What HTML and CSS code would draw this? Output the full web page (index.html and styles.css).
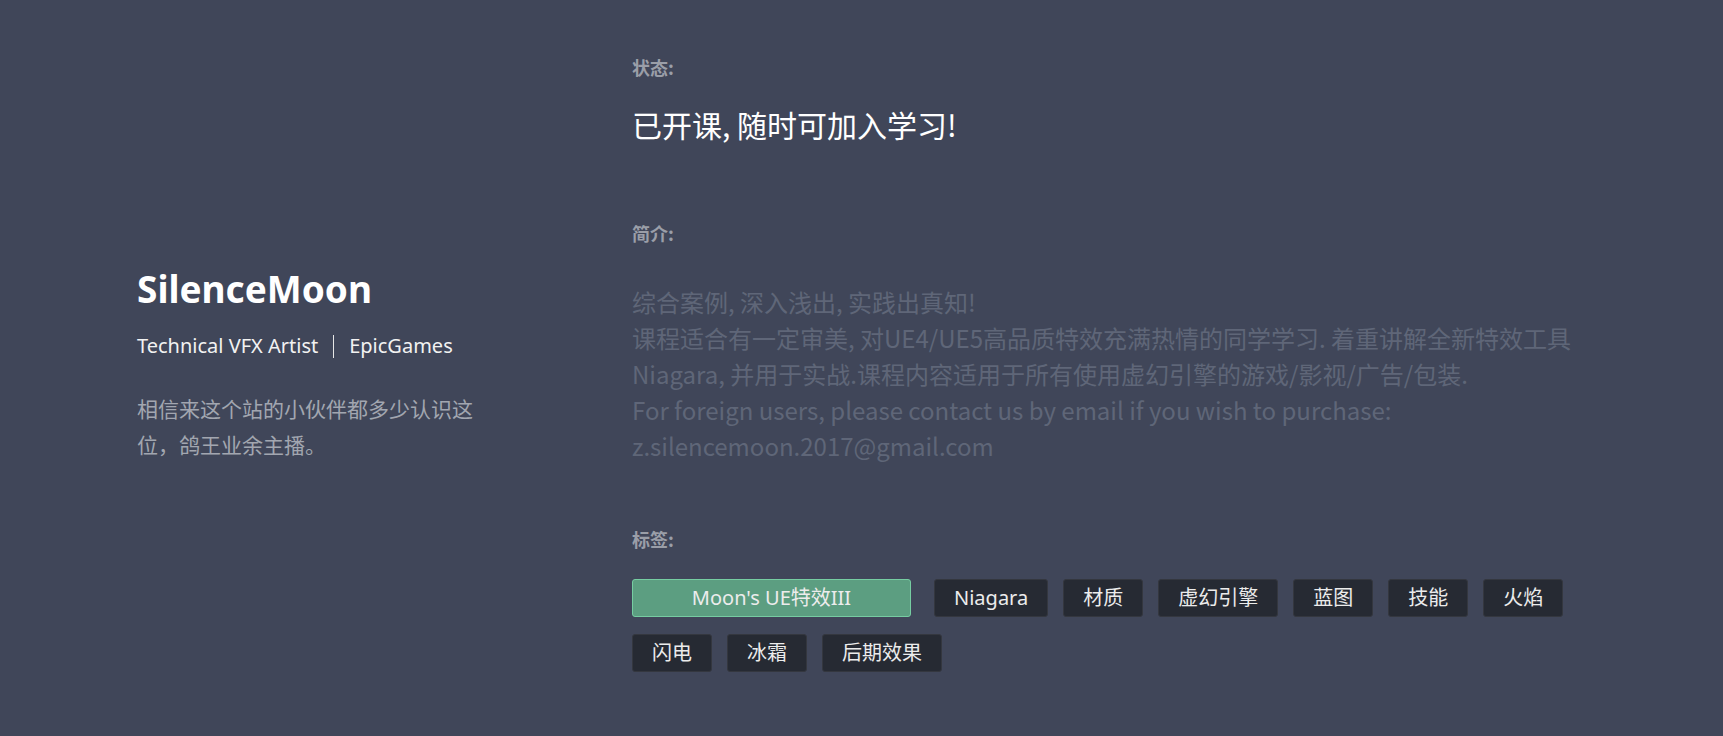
FILE: index.html
```html
<!DOCTYPE html>
<html lang="zh-CN">
<head>
<meta charset="utf-8">
<title>SilenceMoon</title>
<link rel="stylesheet" href="styles.css">
</head>
<body>
<main class="page">
  <section class="author">
    <h1 class="author-name">SilenceMoon</h1>
    <p class="author-role"><span>Technical VFX Artist</span><span class="sep"></span><span>EpicGames</span></p>
    <p class="author-desc">相信来这个站的小伙伴都多少认识这位，鸽王业余主播。</p>
  </section>
  <section class="info">
    <div class="block block-status">
      <div class="label">状态:</div>
      <div class="status">已开课, 随时可加入学习!</div>
    </div>
    <div class="block block-intro">
      <div class="label">简介:</div>
      <p class="intro">综合案例, 深入浅出, 实践出真知!<br>课程适合有一定审美, 对UE4/UE5高品质特效充满热情的同学学习. 着重讲解全新特效工具<br>Niagara, 并用于实战.课程内容适用于所有使用虚幻引擎的游戏/影视/广告/包装.<br>For foreign users, please contact us by email if you wish to purchase:<br>z.silencemoon.2017@gmail.com</p>
    </div>
    <div class="block block-tags">
      <div class="label">标签:</div>
      <ul class="tags">
        <li class="tag tag-primary">Moon's UE特效III</li>
        <li class="tag">Niagara</li>
        <li class="tag">材质</li>
        <li class="tag">虚幻引擎</li>
        <li class="tag">蓝图</li>
        <li class="tag">技能</li>
        <li class="tag">火焰</li>
        <li class="tag">闪电</li>
        <li class="tag">冰霜</li>
        <li class="tag">后期效果</li>
      </ul>
    </div>
  </section>
</main>
</body>
</html>
```

FILE: styles.css
```css
* { box-sizing: border-box; }
html, body { margin: 0; padding: 0; }
body {
  background: #404659;
  font-family: "Noto Sans", "Noto Sans CJK SC", sans-serif;
  color: #ffffff;
  width: 1723px;
  height: 736px;
  overflow: hidden;
}
.page {
  display: flex;
  align-items: center;
  padding-left: 137px;
  height: 736px;
}
.author {
  width: 495px;
  flex: none;
  padding-bottom: 8px;
}
.author-name {
  margin: 0;
  font-size: 37px;
  line-height: 46px;
  font-weight: 700;
  color: #ffffff;
}
.author-role {
  margin: 20px 0 0;
  font-size: 20px;
  line-height: 28px;
  color: #f2f2f2;
  font-weight: 400;
  display: flex;
  align-items: center;
}
.sep {
  display: inline-block;
  width: 1px;
  height: 23px;
  background: #e6e6e6;
  margin: 0 15px;
}
.author-desc {
  margin: 30px 0 0;
  width: 345px;
  font-family: "Noto Sans CJK SC", sans-serif;
  font-size: 21px;
  line-height: 36px;
  color: #a2a6b0;
}
.info {
  flex: 1;
  padding-top: 56px;
  padding-bottom: 66px;
}
.label {
  font-family: "Noto Sans CJK SC", sans-serif;
  font-size: 18px;
  line-height: 24px;
  font-weight: 700;
  color: #9a9ea8;
}
.status {
  margin-top: 24px;
  font-family: "Noto Sans CJK SC", sans-serif;
  font-size: 30px;
  line-height: 42px;
  color: #ffffff;
}
.block-intro { margin-top: 76px; }
.intro {
  margin: 39px 0 0;
  font-family: "Noto Sans CJK SC", sans-serif;
  font-size: 24px;
  line-height: 36px;
  color: #5f6678;
  white-space: nowrap;
}
.block-tags { margin-top: 63px; }
.tags {
  list-style: none;
  margin: 28px 0 0;
  padding: 0;
  display: flex;
  flex-wrap: wrap;
  gap: 17px 15px;
  width: 1000px;
}
.tag {
  height: 38px;
  padding: 0 19px;
  border: 1px solid #34373f;
  border-radius: 3px;
  background: #262a33;
  color: #ececec;
  font-family: "Noto Sans", "Noto Sans CJK SC", sans-serif;
  font-size: 20px;
  line-height: 36px;
}
.tag-primary {
  width: 279px;
  text-align: center;
  background: #5c9e81;
  border-color: #76cda2;
  margin-right: 8px;
}
```
